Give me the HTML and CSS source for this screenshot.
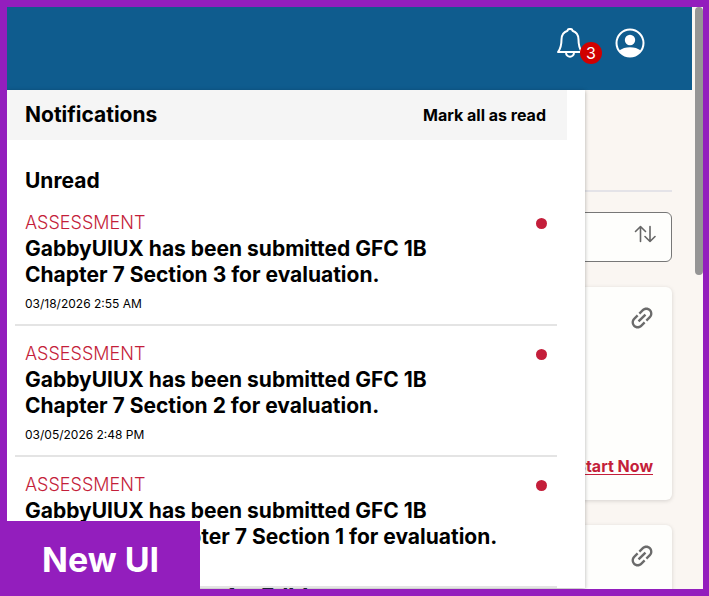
FILE: index.html
```
<!DOCTYPE html>
<html lang="en">
<head>
    <meta charset="utf-8">
    <title>Notifications</title>
    <link rel="stylesheet" href="styles.css">
</head>
<body>
    <div class="frame">
        <div class="page">
            <header class="topbar">
                <button type="button" class="icon-btn bell" aria-label="Notifications, 3 unread">
                    <svg width="28" height="30" viewBox="0 0 28 30" fill="none" stroke="#fff" stroke-width="2" stroke-linejoin="round" stroke-linecap="round">
                        <path d="M11.5 2.700C11.7 .3 16.3 .3 16.5 2.700C20.500 4 22.500 7 22.500 11.500C22.500 18.500 24 21.500 26 24H2C4 21.500 5.500 18.500 5.500 11.500C5.500 7 7.500 4 11.500 2.700Z"/>
                        <path d="M10 24.500C10 30 18 30 18 24.500"/>
                    </svg>
                    <span class="badge">3</span>
                </button>
                <button type="button" class="icon-btn" aria-label="Account">
                    <svg width="30" height="30" viewBox="0 0 30 30">
                        <circle cx="15" cy="15" r="13.500" fill="none" stroke="#fff" stroke-width="2"/>
                        <circle cx="15" cy="12" r="5.200" fill="#fff"/>
                        <path d="M4.500 22.500C9 18 21 18 25.500 22.500C20 30.500 10 30.500 4.500 22.500Z" fill="#fff"/>
                    </svg>
                </button>
            </header>

            <main class="content">
                <hr class="divider">
                <div class="filter">
                    <button type="button" class="icon-btn" aria-label="Sort">
                        <svg width="22" height="18" viewBox="0 0 22 18" fill="none" stroke="#666" stroke-width="1.600" stroke-linecap="round" stroke-linejoin="round">
                            <path d="M6.500 16.500V1.500M1.500 6.500L6.500 1.500L11.500 6.500"/>
                            <path d="M16 1.500V16.500M11 11.500L16 16.500L21 11.500"/>
                        </svg>
                    </button>
                </div>
                <section class="card">
                    <button type="button" class="icon-btn link-icon" aria-label="Copy link">
                        <svg width="22" height="22" viewBox="3 3 18 18" fill="#6b6b6b">
                            <path transform="rotate(-45 12 12)" d="M3.900 12c0-1.710 1.390-3.100 3.100-3.100h4V7H7c-2.760 0-5 2.240-5 5s2.240 5 5 5h4v-1.900H7c-1.710 0-3.100-1.390-3.100-3.100zM8 13h8v-2H8v2zm9-6h-4v1.900h4c1.710 0 3.100 1.390 3.100 3.100s-1.390 3.100-3.100 3.100h-4V17h4c2.760 0 5-2.240 5-5s-2.240-5-5-5z"/>
                        </svg>
                    </button>
                    <a href="#" class="start">Start Now</a>
                </section>
                <section class="card">
                    <button type="button" class="icon-btn link-icon" aria-label="Copy link">
                        <svg width="22" height="22" viewBox="3 3 18 18" fill="#6b6b6b">
                            <path transform="rotate(-45 12 12)" d="M3.900 12c0-1.710 1.390-3.100 3.100-3.100h4V7H7c-2.760 0-5 2.240-5 5s2.240 5 5 5h4v-1.900H7c-1.710 0-3.100-1.390-3.100-3.100zM8 13h8v-2H8v2zm9-6h-4v1.900h4c1.710 0 3.100 1.390 3.100 3.100s-1.390 3.100-3.100 3.100h-4V17h4c2.760 0 5-2.240 5-5s-2.240-5-5-5z"/>
                        </svg>
                    </button>
                    <h3 class="card-title">1st Edition</h3>
                </section>
            </main>

            <!-- notification dropdown -->
            <div class="panel">
                <div class="panel-head">
                    <h2>Notifications</h2>
                    <button type="button" class="mark-read">Mark all as read</button>
                </div>
                <h2 class="group">Unread</h2>
                <ul class="list">
                    <li class="item">
                        <div class="type">ASSESSMENT <span class="dot"></span></div>
                        <p class="message">GabbyUIUX has been submitted GFC 1B Chapter 7 Section 3 for evaluation.</p>
                        <time class="date">03/18/2026 2:55 AM</time>
                    </li>
                    <li class="item">
                        <div class="type">ASSESSMENT <span class="dot"></span></div>
                        <p class="message">GabbyUIUX has been submitted GFC 1B Chapter 7 Section 2 for evaluation.</p>
                        <time class="date">03/05/2026 2:48 PM</time>
                    </li>
                    <li class="item">
                        <div class="type">ASSESSMENT <span class="dot"></span></div>
                        <p class="message">GabbyUIUX has been submitted GFC 1B Benchmark Chapter 7 Section 1 for evaluation.</p>
                    </li>
                </ul>
            </div>
        </div>
        <div class="scrollbar"><div class="thumb"></div></div>
        <div class="tag">New UI</div>
    </div>
</body>
</html>
```
FILE: styles.css
```
* { box-sizing: border-box; }
body { margin: 0; font-family: Inter, "Open Sans", sans-serif; color: #000; }
h2, h3, p, ul { margin: 0; padding: 0; }
button { font-family: inherit; border: 0; padding: 0; background: none; cursor: pointer; }

.frame { position: relative; display: flex; height: 100vh; border: 7px solid #931ebd; border-right-width: 6px; background: #faf6f2; overflow: hidden; }
.page { position: relative; flex: 1; min-width: 0; }
.scrollbar { width: 11px; padding-left: 3px; }
.thumb { height: 46%; background: #959595; border-radius: 4px; }

.topbar { display: flex; justify-content: flex-end; align-items: center; gap: 31px; height: 83px; padding: 0 47px 11px 0; background: #0f5c8e; }
.icon-btn { display: block; }
.icon-btn svg { display: block; }
.bell { position: relative; }
.badge { position: absolute; left: 24px; top: 14px; width: 22px; height: 22px; border-radius: 50%; background: #d00000; color: #fff; font-size: 16px; line-height: 22px; text-align: center; }

.content { padding: 100px 20px 0; }
.divider { margin: 0 0 20px; border: 0; border-top: 2px solid #e4e3e8; }
.filter { display: flex; justify-content: flex-end; align-items: flex-start; height: 50px; margin-bottom: 25px; padding: 12px 15px; border: 1px solid #777; border-radius: 6px; background: #fefefc; }
.card { display: flex; flex-direction: column; justify-content: space-between; height: 213px; margin-bottom: 25px; padding: 20px 19px 24px; border-radius: 6px; background: #fefefc; box-shadow: 0 1px 4px rgba(0,0,0,0.15); }
.link-icon { align-self: flex-end; }
.start { align-self: flex-end; color: #c41e3a; font-size: 16px; line-height: 20px; font-weight: 700; text-underline-offset: 2px; }
.card-title { flex: 1; padding: 15px 0 0 180px; color: #222b40; font-size: 22px; line-height: 28px; }

.panel { position: absolute; left: 0; top: 83px; bottom: 1px; width: 578px; max-width: 100%; padding-right: 18px; overflow: hidden; background: #fff; box-shadow: 0 1px 4px rgba(0,0,0,0.3); }
.panel-head { display: flex; justify-content: space-between; align-items: center; height: 50px; padding: 0 21px 0 18px; background: #f5f5f5; }
.panel h2 { font-size: 21px; line-height: 26px; font-weight: 700; }
.mark-read { font-size: 16px; line-height: 20px; font-weight: 700; color: #000; }
.panel .group { padding: 28px 18px 17px; }
.list { list-style: none; padding: 0 10px 0 8px; }
.item { height: 131px; padding: 16px 10px 0; border-bottom: 2px solid #e4e4e4; }
.item:first-child { height: 115px; padding-top: 0; }
.type { display: flex; justify-content: space-between; align-items: center; color: #c41e3a; font-size: 18px; line-height: 24px; font-weight: 300; }
.dot { width: 11px; height: 11px; border-radius: 50%; background: #c41e3a; }
.message { max-width: 480px; padding-top: 1px; font-size: 21px; line-height: 26px; font-weight: 700; }
.date { display: block; margin-top: 7px; font-size: 12px; line-height: 18px; }

.tag { position: absolute; left: 0; bottom: 0; width: 193px; height: 68px; padding-left: 35px; background: #931ebd; color: #fff; font-size: 34px; line-height: 78px; font-weight: 700; }
```
